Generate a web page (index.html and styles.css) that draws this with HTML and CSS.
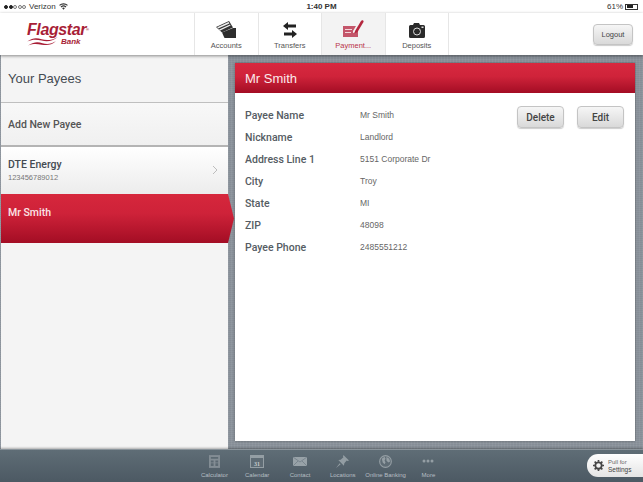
FILE: index.html
```html
<!DOCTYPE html>
<html lang="en">
<head>
  <meta charset="UTF-8" />
  <title>Flagstar Bank Payees</title>
  <link rel="stylesheet" href="styles.css">
</head>
<body>
  <div class="status-bar">
    <div class="status-left">
      <span class="signal"><i class="on"></i><i class="on"></i><i></i><i></i><i></i></span>
      <span>Verizon</span>
      <svg width="9" height="7" viewBox="0 0 10 8"><path d="M5 7.600 3.400 5.800a2.300 2.300 0 0 1 3.200 0zM2.600 5 1.700 4a4.800 4.800 0 0 1 6.600 0l-.9 1a3.500 3.500 0 0 0-4.800 0zM.9 3.200 0 2.200a7.300 7.300 0 0 1 10 0l-.9 1a6 6 0 0 0-8.200 0z" fill="#333"/></svg>
    </div>
    <div class="status-time">1:40 PM</div>
    <div class="status-right">
      <span>61%</span>
      <span class="battery"><span class="battery-fill"></span></span>
    </div>
  </div>

  <nav class="navbar">
    <div class="logo">
      <div class="logo-name">Flagstar<sup>®</sup></div>
      <div class="logo-row">
        <svg width="31" height="9" viewBox="0 0 34 10"><path d="M0 5C7 0 11 1 16 2.500S27 4 34 0C28 5 22 5.500 16 4S6 2.500 0 5zM1 9.500C8 5 12 5.500 17 7S27 8 32 4.500C27 9.500 21 9.500 16 8.500S7 7 1 9.500z" fill="#a81e36"/></svg>
        <span>Bank</span>
      </div>
    </div>
    <ul class="nav-links">
      <li>
        <svg width="20" height="17" viewBox="0 0 20 17"><path d="M0 6 13 0l4 6.500-11 5z" fill="#333"/><path d="m1.200 6.300 11.400-5.200.8 1.300L2.200 7.600zM3 8.600l11-5 .6 1L3.700 9.700z" fill="#eee"/><path d="M6 11.500 17 7h3v10H8.500z" fill="#2d2d2d"/></svg>
        <span>Accounts</span>
      </li>
      <li>
        <svg width="14" height="16" viewBox="0 0 14 16"><path d="M5 0v2.500h8v3H5V8L0 4zM9 8v2.500H1v3h8V16l5-4z" fill="#222"/></svg>
        <span>Transfers</span>
      </li>
      <li class="active">
        <svg width="21" height="18" viewBox="0 0 21 18"><path d="M0 6h13l-3 5v2l3-1 2-2.500V17H0z" fill="#c4566a"/><path d="M2 9h7v1H2zm0 3h6v1H2z" fill="#f3d5da"/><path d="M12 11l6-10c1-1.500 3-.5 2.500 1L14.500 12l-3 1.500z" fill="#b4283f"/></svg>
        <span>Payment...</span>
      </li>
      <li>
        <svg width="16" height="15" viewBox="0 0 16 15"><path d="M1.500 2H4l1-2h5l1 2h3.500A1.500 1.500 0 0 1 16 3.500v10a1.500 1.500 0 0 1-1.500 1.500h-13A1.500 1.500 0 0 1 0 13.500v-10A1.500 1.500 0 0 1 1.500 2z" fill="#2a2a2a"/><circle cx="8" cy="8.500" r="3.500" fill="none" stroke="#ddd"/><rect x="12.500" y="3.500" width="2" height="1.500" fill="#ddd"/></svg>
        <span>Deposits</span>
      </li>
    </ul>
    <button class="btn btn-logout">Logout</button>
  </nav>

  <div class="content">
    <aside class="sidebar">
      <div class="side-title">Your Payees</div>
      <div class="side-add">Add New Payee</div>
      <div class="side-item">
        <div>
          <div class="item-name">DTE Energy</div>
          <div class="item-number">123456789012</div>
        </div>
        <svg width="6" height="10" viewBox="0 0 6 10"><path d="m1 1 4 4-4 4" fill="none" stroke="#bdbdbd"/></svg>
      </div>
      <div class="side-item selected">
        <div class="item-name">Mr Smith</div>
      </div>
    </aside>

    <main class="panel">
      <h2 class="panel-head">Mr Smith</h2>
      <div class="panel-body">
        <dl class="details">
          <dt>Payee Name</dt><dd>Mr Smith</dd>
          <dt>Nickname</dt><dd>Landlord</dd>
          <dt>Address Line 1</dt><dd>5151 Corporate Dr</dd>
          <dt>City</dt><dd>Troy</dd>
          <dt>State</dt><dd>MI</dd>
          <dt>ZIP</dt><dd>48098</dd>
          <dt>Payee Phone</dt><dd>2485551212</dd>
        </dl>
        <div class="panel-actions">
          <button class="btn btn-action">Delete</button>
          <button class="btn btn-action">Edit</button>
        </div>
      </div>
    </main>
  </div>

  <footer class="toolbar">
    <ul class="tools">
      <li>
        <span class="tool-icon"><svg width="11" height="13" viewBox="0 0 12 14"><path d="M0 0h12v14H0z" fill="#838d94"/><path d="M2 2h8v2H2zM2 6h3v2H2zm5 0h3v2H7zm-5 3h3v3H2zm5 0h3v3H7z" fill="#5c6972"/></svg></span>
        <span>Calculator</span>
      </li>
      <li>
        <span class="tool-icon"><svg width="14" height="13" viewBox="0 0 14 13"><rect x=".5" y=".5" width="13" height="12" fill="#5f6c75" stroke="#949ea4"/><path d="M1 1h12v2H1z" fill="#949ea4"/><text x="7" y="10.500" text-anchor="middle" class="cal-day">31</text></svg></span>
        <span>Calendar</span>
      </li>
      <li>
        <span class="tool-icon"><svg width="14" height="9" viewBox="0 0 14 9"><path d="M0 0h14v9H0z" fill="#98a2a8"/><path d="m0 0 7 5 7-5M0 9l5-5m9 5L9 4" fill="none" stroke="#6d7a82" stroke-width=".7"/></svg></span>
        <span>Contact</span>
      </li>
      <li>
        <span class="tool-icon"><svg width="13" height="13" viewBox="0 0 14 14"><path d="m8 0 6 6-1.500.500-1-.5L9 9l-.5 2.500L2.500 5.500 5 5l3-2.500-.5-1zM4 9 0 14l5-4z" fill="#939da3"/></svg></span>
        <span>Locations</span>
      </li>
      <li>
        <span class="tool-icon"><svg width="13" height="13" viewBox="0 0 14 14"><circle cx="7" cy="7" r="6.300" fill="#5f6c75" stroke="#949ea4" stroke-width="1.200"/><path d="M3 4l3-2 1 2-1 2 1 2-1 2-2-2zM8 2l3 2 1 3-2 1-2-2z" fill="#949ea4"/></svg></span>
        <span>Online Banking</span>
      </li>
      <li>
        <span class="tool-icon"><svg width="12" height="4" viewBox="0 0 12 4"><circle cx="2" cy="2" r="1.500" fill="#949ea4"/><circle cx="6" cy="2" r="1.500" fill="#949ea4"/><circle cx="10" cy="2" r="1.500" fill="#949ea4"/></svg></span>
        <span>More</span>
      </li>
    </ul>
    <div class="pull">
      <svg width="11" height="11" viewBox="0 0 12 12"><circle cx="6" cy="6" r="3.500" fill="none" stroke="#444" stroke-width="2"/><path d="M6 0v2M6 10v2M0 6h2M10 6h2M1.800 1.800l1.400 1.400M8.800 8.800l1.400 1.400M1.800 10.200l1.400-1.400M8.800 3.200l1.400-1.400" stroke="#444" stroke-width="1.800"/></svg>
      <div class="pull-text"><span>Pull for</span><strong>Settings</strong></div>
    </div>
  </footer>
</body>
</html>
```

FILE: styles.css
```css
* { box-sizing: border-box; }
body {
  margin: 0;
  width: 643px;
  height: 482px;
  overflow: hidden;
  display: flex;
  flex-direction: column;
  font-family: "Liberation Sans", Arial, sans-serif;
  background: #fff;
  color: #444b52;
}

.status-bar {
  height: 13px;
  padding: 0 3px 0 4px;
  display: flex;
  justify-content: space-between;
  align-items: center;
  font-size: 8px;
  color: #333;
  background: #fff;
  position: relative;
}
.status-left { display: flex; align-items: center; gap: 3px; }
.signal { display: flex; gap: 0.5px; }
.signal i {
  width: 4px;
  height: 4px;
  border-radius: 50%;
  border: 0.5px solid #777;
}
.signal i.on { background: #222; border-color: #222; }
.status-time {
  position: absolute;
  left: 0;
  right: 0;
  text-align: center;
  font-weight: bold;
}
.status-right { display: flex; align-items: center; gap: 2px; }
.battery {
  width: 13px;
  height: 6px;
  border: 0.5px solid #333;
  padding: 0.5px;
  margin-right: 2px;
  display: block;
}
.battery-fill { display: block; height: 100%; width: 61%; background: #222; }

.navbar {
  height: 42px;
  display: flex;
  align-items: stretch;
  background: #fff;
  box-shadow: 0 1px 3px rgba(0,0,0,0.45);
  position: relative;
  z-index: 2;
}
.logo {
  width: 194px;
  padding: 9px 0 0 27px;
  color: #a81e36;
  font-style: italic;
  font-weight: bold;
}
.logo-name { font-size: 16px; line-height: 15px; letter-spacing: -0.4px; }
.logo-name sup { font-size: 4px; vertical-align: top; font-style: normal; }
.logo-row { display: flex; align-items: center; gap: 3px; font-size: 8px; }
.nav-links {
  list-style: none;
  display: flex;
  margin: 0;
  padding: 0;
  border-left: 1px solid #e6e6e6;
}
.nav-links li {
  width: 63.500px;
  border-right: 1px solid #e6e6e6;
  display: flex;
  flex-direction: column;
  align-items: center;
  justify-content: flex-end;
  gap: 3px;
  padding-bottom: 5px;
  font-size: 7.500px;
  color: #555;
}
.nav-links li.active { background: #f3f3f3; color: #b9334a; }
.nav-links svg { display: block; }
.btn {
  font-family: inherit;
  color: #444;
  background: linear-gradient(#f6f6f6, #d9d9d9);
  border: 1px solid #c4c4c4;
  border-radius: 4px;
  box-shadow: 0 1px 1px rgba(0,0,0,0.2);
  padding: 0;
}
.btn-logout {
  width: 40px;
  height: 21px;
  margin: 11px 10px 0 auto;
  font-size: 7.500px;
}

.content {
  flex: 1;
  display: flex;
  min-height: 0;
  padding-left: 1px;
  background-color: #8b939c;
  background-image:
    repeating-linear-gradient(90deg, rgba(255,255,255,0.05) 0 1px, transparent 1px 3px),
    repeating-linear-gradient(0deg, rgba(0,0,0,0.04) 0 1px, transparent 1px 2px);
}
.sidebar {
  width: 227px;
  background: #f4f4f4;
  display: flex;
  flex-direction: column;
  position: relative;
}
.side-title {
  height: 48px;
  padding-left: 7px;
  display: flex;
  align-items: center;
  font-size: 13px;
  border-bottom: 1px solid #bfbfbf;
}
.side-add {
  height: 44px;
  padding-left: 7px;
  display: flex;
  align-items: center;
  font-family: Roboto, sans-serif;
  font-size: 10.500px;
  font-weight: 500;
  color: #555;
  background: linear-gradient(#f8f8f8, #f0f0f0);
  border-bottom: 2px solid #b4b4b4;
}
.side-item {
  height: 47px;
  padding: 0 10px 2px 7px;
  display: flex;
  align-items: center;
  justify-content: space-between;
  background: linear-gradient(#fff, #ececec);
}
.item-name { font-family: Roboto, sans-serif; font-size: 10.500px; font-weight: 500; }
.item-number { font-size: 7.500px; color: #777; margin-top: 2px; }
.side-item.selected {
  height: 49px;
  align-items: flex-start;
  padding-top: 12px;
  background: linear-gradient(#d6273c, #ce2239 40%, #a30d24);
  position: relative;
}
.side-item.selected .item-name { color: #fbe6e8; }
.side-item.selected::after {
  content: "";
  position: absolute;
  top: 0;
  left: 100%;
  width: 6px;
  height: 100%;
  background: linear-gradient(#d6273c, #ce2239 40%, #a30d24);
  clip-path: polygon(0 0, 100% 50%, 0 100%);
}

.panel {
  width: 400px;
  height: 378px;
  margin: 8px 0 0 7px;
  background: #fff;
  display: flex;
  flex-direction: column;
  box-shadow: 0 0 2px rgba(0,0,0,0.4);
}
.panel-head {
  margin: 0;
  height: 30px;
  padding-left: 10px;
  display: flex;
  align-items: center;
  font-size: 13px;
  font-weight: normal;
  color: #fbeaec;
  background: linear-gradient(#d8283f, #cf233a 45%, #a30d24);
}
.panel-body {
  flex: 1;
  display: flex;
  justify-content: space-between;
  padding: 11px 11px 0 10px;
}
.details {
  margin: 0;
  display: grid;
  grid-template-columns: 115px auto;
  grid-auto-rows: 22px;
  align-items: center;
  align-self: flex-start;
}
.details dt { font-family: Roboto, sans-serif; font-size: 10.500px; font-weight: 500; color: #555c63; }
.details dd { margin: 0; font-size: 8.500px; color: #666; }
.panel-actions { display: flex; gap: 13px; margin-top: 2px; }
.btn-action {
  width: 47px;
  height: 22px;
  font-family: Roboto, sans-serif;
  font-size: 10px;
  font-weight: 500;
}

.toolbar {
  height: 33px;
  display: flex;
  background: linear-gradient(#5f6d76, #4c5963);
  border-top: 1px solid #8a949b;
  box-shadow: 0 -1px 2px rgba(0,0,0,0.3);
  position: relative;
}
.tools {
  list-style: none;
  display: flex;
  margin: 0 0 0 193px;
  padding: 0;
}
.tools li {
  width: 42.800px;
  display: flex;
  flex-direction: column;
  align-items: center;
  gap: 4px;
  padding-top: 4px;
  font-size: 6px;
  color: #b6bec3;
  white-space: nowrap;
}
.tool-icon {
  height: 14px;
  display: flex;
  align-items: center;
}
.tool-icon svg { display: block; }
.cal-day { font-size: 6px; font-weight: bold; fill: #c8cdd0; font-family: "Liberation Serif", serif; }
.pull {
  margin: 4px 0 0 auto;
  width: 56px;
  height: 23px;
  border-radius: 11px 0 0 11px;
  background: linear-gradient(#fff, #e4e4e4);
  display: flex;
  align-items: center;
  gap: 4px;
  padding-left: 6px;
  font-size: 6px;
  color: #666;
}
.pull-text { display: flex; flex-direction: column; line-height: 8px; }
.pull-text strong { font-weight: normal; color: #444; font-size: 6.500px; }
```
